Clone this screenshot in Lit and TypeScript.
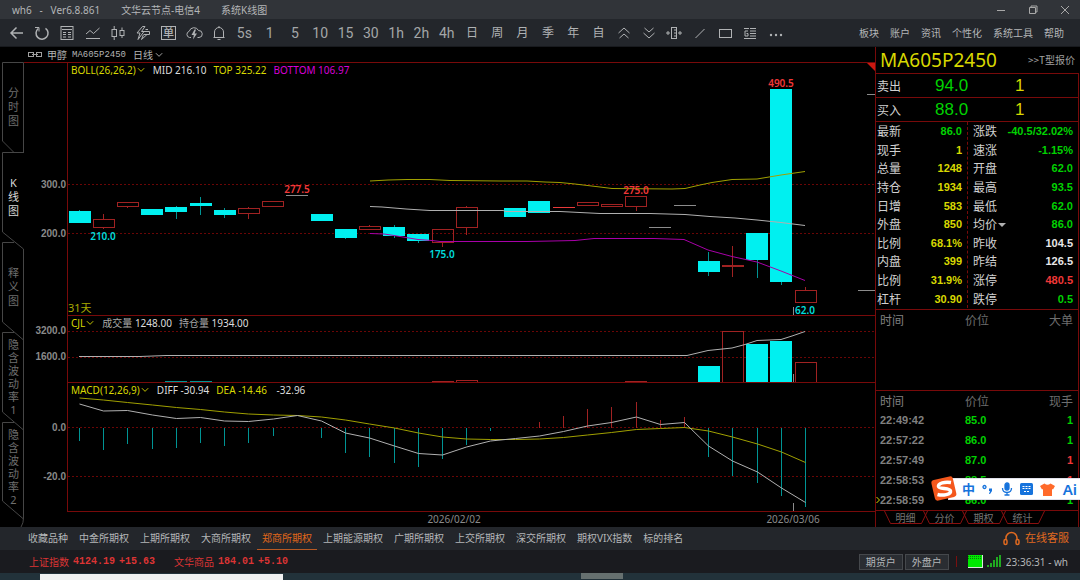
import { LitElement, html, svg, css } from "lit";
import { customElement } from "lit/decorators.js";
import { classMap } from "lit/directives/class-map.js";
import { styleMap } from "lit/directives/style-map.js";

type Kind = "down" | "up" | "flat" | "bright" | "redflat" | "cross";
// kind, body top, body bottom, high, low
type Candle = [Kind, number, number, number, number];

const FIRST_X = 79.5;
const STEP = 24.2;
const PLOT_X = 68;
const PLOT_W = 807;
const wickX = (i: number) => Math.floor(FIRST_X + STEP * i);
const bodyX = (i: number) => Math.round(FIRST_X + STEP * i) - 11;

const candles: Candle[] = [
  ["down", 211, 223, 210, 223],
  ["up", 219, 228, 214, 229],
  ["up", 202, 207, 202, 208],
  ["down", 209, 215, 209, 215],
  ["down", 207, 212, 206, 219],
  ["down", 203, 206, 197, 215],
  ["down", 210, 215, 208, 218],
  ["up", 208, 214, 207, 219],
  ["up", 201, 207, 201, 207],
  ["flat", 195, 196, 195, 196],
  ["down", 214, 221, 214, 221],
  ["down", 229, 238, 229, 239],
  ["up", 226, 230, 225, 230],
  ["down", 227, 236, 225, 238],
  ["down", 234, 241, 234, 243],
  ["up", 229, 243, 229, 247],
  ["up", 207, 228, 206, 235],
  ["bright", 210, 211, 210, 211],
  ["down", 208, 217, 208, 217],
  ["down", 201, 213, 201, 213],
  ["redflat", 207, 208, 207, 208],
  ["up", 202, 206, 202, 206],
  ["up", 204, 207, 204, 207],
  ["up", 196, 207, 196, 211],
  ["flat", 227, 228, 227, 228],
  ["flat", 205, 206, 205, 206],
  ["down", 261, 272, 252, 276],
  ["cross", 265, 267, 246, 277],
  ["down", 233, 260, 233, 278],
  ["down", 89, 282, 89, 285],
  ["up", 290, 303, 287, 303],
];

const bollTop = "370,181 388,180 407,179.5 430,179.5 450,180.5 500,181 527,181 545,182 560,182.5 575,184 600,187 612,188.5 672,189 685,188.5 700,185 712,182.5 732,179.5 757,179 781,175 805,171.5";
const bollMid = "370,206.5 382,207 394,208 406,209 430,210.5 503,210.5 506,211.5 560,211.5 600,213.5 650,213.5 685,214.5 710,216.5 735,218 757,220 781,222.5 805,225.5";
const bollBottom = "370,233.5 384,234 394,235.5 406,237.5 418,239.5 432,240.5 440,241.5 527,241.5 552,241 575,240.5 594,238.5 654,238.5 684,239.5 708,250 732,256.5 757,262 781,271 805,280.5";

const volumes: [number, "down" | "up", number][] = [
  [4, "down", 381], [5, "down", 381], [15, "up", 381], [16, "up", 380], [23, "up", 381],
  [26, "down", 366], [27, "up", 331], [28, "down", 344], [29, "down", 341], [30, "up", 362],
];
const openInterest = "79,356.5 140,356.5 166,355.5 560,355.5 687,355.5 708,350.5 732,348 745,344.5 757,340.5 781,339.5 792,336 805,331.5";

const macdBars = [441, 450, 444, 449, 448, 443, 446, 443, 436, 428, 438, 453, 457, 463, 467, 459, 445, 431, 428, 422, 416, 409, 407, 402, 420, 417, 457, 476, 483, 496, 507];
const dea = [398, 400, 402.5, 405, 407.5, 409.5, 412, 414, 415, 415.5, 417, 420, 424, 428, 433, 437, 439, 439.5, 439.5, 439, 437.5, 435, 432.5, 429.5, 428.5, 427.5, 431, 437, 444, 452, 462.5];
const diff = [404, 411, 410.5, 415, 418.5, 417.5, 421, 421.5, 419, 415.5, 421, 433, 438, 446, 453.5, 455, 447, 441, 438.5, 436, 431.5, 426, 422.5, 417, 424.5, 422.5, 446, 461, 472, 488, 502.5];
const series = (v: number[]) => v.map((y, i) => `${wickX(i) + 0.5},${y}`).join(" ");

const chev = html`<svg class="chev" viewBox="0 0 10 6" width="9" height="6"><path d="M1 1L4.500 4.500L8 1" /></svg>`;

const icon = (body: unknown, w = 18) => html`<svg class="ico" width=${w} height="16" viewBox="0 0 ${w} 16" aria-hidden="true">${body}</svg>`;

const tools: { label: string; view: unknown }[] = [
  { label: "返回", view: icon(svg`<path class="b" d="M15 8H3.500M8.500 2.500L3 8L8.500 13.500"/>`) },
  { label: "刷新", view: icon(svg`<path class="b" d="M5.300 3.500A6 6 0 1 0 12.500 3.300"/><path d="M2 2.500H6V6.500"/>`) },
  { label: "报价", view: icon(svg`<rect x="3" y="1.500" width="12" height="13"/><path d="M4 4.500H14M5 7.500H8M10 7.500H13M5 9.500H8M10 9.500H13M5 12H8M10 12H13"/>`) },
  { label: "分时", view: icon(svg`<path d="M2 9L6 5.500L9.500 8.500L15.500 3M2 13.500H16"/>`) },
  { label: "K线", view: icon(svg`<rect x="3" y="4.500" width="4.500" height="7"/><path d="M5.200 1V4.500M5.200 11.500V15M13 2.500V5.500M13 10.500V13"/><rect x="11" y="5.500" width="4" height="5"/>`) },
  { label: "闪电下单", view: icon(svg`<path d="M8.500 1.500L3 8H6L4 14.500L10 6.500H7.500L11 1.500ZM9 6.500H15.500V9.500H10M9.500 9.500L7.500 14.500L13 9.500M11.500 4.500H14"/>`) },
  { label: "下单", view: html`<span class="boxed">单</span>` },
  { label: "云", view: icon(svg`<path d="M6 12.500H4.500A3.200 3.200 0 0 1 4.200 6.300A5 5 0 0 1 13.500 5.500A3.500 3.500 0 0 1 14 12.500H12.500"/><path class="fill" d="M9.500 4.500L6.500 10H8.800L8 14.500L12 8.500H9.600L11 4.500Z"/>`) },
  { label: "提醒", view: icon(svg`<path d="M3.500 12.500H14.500M4.500 12.500V7A4.500 4.500 0 0 1 13.500 7V12.500M9 1V2.500M7.500 14.500H10.500"/>`) },
  ...["5s", "1", "5", "10", "15", "30", "1h", "2h", "4h"].map((t) => ({ label: t, view: html`<span class="num">${t}</span>` })),
  ...["日", "周", "月", "季", "年", "自"].map((t) => ({ label: t, view: html`<span class="han">${t}</span>` })),
  { label: "放大", view: icon(svg`<path d="M3.500 8L9 3L14.500 8M4.500 13L9 9L13.500 13"/>`) },
  { label: "缩小", view: icon(svg`<path d="M3.500 8L9 13L14.500 8M4.500 3L9 7L13.500 3"/>`) },
  { label: "间距", view: icon(svg`<rect x="6.500" y="2.500" width="5" height="11"/><path d="M9 5H11M9 8H11M9 11H11M1 8H5M13 8H17M3 6V10M15 6V10"/>`) },
  { label: "画线", view: icon(svg`<path d="M4.500 13L13.500 4"/>`) },
  { label: "矩形", view: icon(svg`<rect x="3.500" y="4.500" width="12" height="8"/>`) },
  { label: "资讯列表", view: icon(svg`<path d="M9 3.500H15M9 6H15M9 8.500H15M9 11H15M3 13.500H15M3 3.500H8"/><path d="M7 6H4V11H7V8.500H5.500"/>`) },
  { label: "更多", view: icon(svg`<circle class="fill" cx="4" cy="10" r="1.200"/><circle class="fill" cx="9" cy="10" r="1.200"/><circle class="fill" cx="14" cy="10" r="1.200"/>`) },
];

const quotes: [string, string, string, string, string, string][] = [
  ["最新", "86.0", "g", "涨跌", "-40.5/32.02%", "g"],
  ["现手", "1", "y", "速涨", "-1.15%", "g"],
  ["总量", "1248", "y", "开盘", "62.0", "g"],
  ["持仓", "1934", "y", "最高", "93.5", "g"],
  ["日增", "583", "y", "最低", "62.0", "g"],
  ["外盘", "850", "y", "均价", "86.0", "g"],
  ["比例", "68.1%", "y", "昨收", "104.5", "w"],
  ["内盘", "399", "y", "昨结", "126.5", "w"],
  ["比例", "31.9%", "y", "涨停", "480.5", "r"],
  ["杠杆", "30.90", "y", "跌停", "0.5", "g"],
];

const ticks: [string, string, string, string][] = [
  ["22:49:42", "85.0", "1", "g"],
  ["22:57:22", "86.0", "1", "g"],
  ["22:57:49", "87.0", "1", "r"],
  ["22:58:53", "88.5", "1", "r"],
  ["22:58:59", "86.0", "1", "g"],
];

const base = css`
  :host { box-sizing: border-box; }
  * { box-sizing: border-box; }
  button { appearance: none; background: none; border: 0; margin: 0; padding: 0; color: inherit; font: inherit; cursor: pointer; }
  a { color: inherit; text-decoration: none; }
  .y { color: #d8d800; }
  .g { color: #00d200; }
  .r { color: #f03838; }
  .w { color: #e8e8e8; }
  .m { color: #d800d8; }
  .chev { fill: none; stroke: currentColor; stroke-width: 1; }
`;

@customElement("chart-panels")
class ChartPanels extends LitElement {
  static styles = [base, css`
    :host { display: flex; flex-direction: column; flex: 1; min-width: 0; color: #dcdcdc; font: 10px/12px "Noto Sans", "Noto Sans CJK SC", sans-serif; }
    .symbol { height: 15px; display: flex; align-items: center; gap: 5px; padding: 0 4px; color: #b4b4b4; font-size: 10px; }
    .symbol .code { font: 9px/12px "Liberation Mono", monospace; margin-right: 2px; }
    .symbol button { display: flex; align-items: center; gap: 2px; }
    .link { fill: none; stroke: #a0a0a0; }
    .panels { flex: 1; min-height: 0; display: grid; grid-template-columns: 43px 1fr; grid-template-rows: 253fr 67fr 129fr; border-bottom: 1px solid transparent; }
    .axis, .plot { position: relative; min-height: 0; }
    .axis.first { border-top: 1px solid #780a0a; }
    .axis span { position: absolute; right: 1px; font: bold 10px/12px "Liberation Sans", sans-serif; color: #8a8a8a; margin-top: -6px; }
    .plot { border-top: 1px solid #780a0a; border-left: 1px solid #780a0a; display: flex; flex-direction: column; justify-content: space-between; }
    .plot.last { box-shadow: 0 1px 0 #780a0a; }
    .plot > svg { position: absolute; inset: 0; width: 100%; height: 100%; }
    .head { position: relative; display: flex; align-items: center; gap: 7px; padding: 0 3px; height: 13px; white-space: nowrap; }
    .head button { display: flex; align-items: center; gap: 1px; }
    .head .han { color: #a8a8a8; }
    .days { position: relative; color: #a8a800; line-height: 14px; font-size: 11px; }
    .note { position: absolute; font-weight: 600; transform: translateX(-50%); line-height: 12px; }
    .cy { color: #00dcdc; }
    .dates { height: 15px; position: relative; margin-left: 44px; color: #8a8a8a; font: 10px/14px "Noto Sans", sans-serif; }
    .dates span { position: absolute; transform: translateX(-50%); }
    .crisp { shape-rendering: crispEdges; }
    .grid { stroke: #6a0606; stroke-dasharray: 2 2; fill: none; }
    .body-down { fill: #00f0f0; }
    .body-up { fill: none; stroke: #a02222; }
    .wick-down { fill: #009494; }
    .wick-up { fill: #a02222; }
    .grey { fill: #8c8c8c; }
    .white { fill: #f0f0f0; }
    .red { fill: #e83a3a; }
    .corner { fill: #cc1810; }
    .l { fill: none; stroke-width: 1; }
    .ly { stroke: #a0a000; }
    .lw { stroke: #b0b0b0; }
    .lm { stroke: #a800a8; }
  `];

  private at(x: number) {
    return `${((x - PLOT_X) / PLOT_W) * 100}%`;
  }

  private note(text: string, x: number, y: number, cls: string) {
    return html`<span class="note ${cls}" style=${styleMap({ left: this.at(x), top: `${((y - 63) / 252) * 100}%` })}>${text}</span>`;
  }

  private candle([kind, top, bottom, high, low]: Candle, i: number) {
    const x = wickX(i);
    const left = bodyX(i);
    if (kind === "flat" || kind === "bright" || kind === "redflat") {
      const fill = { flat: "grey", bright: "white", redflat: "red" }[kind];
      return svg`<rect class=${fill} x=${left} y=${top} width="22" height="1"/>`;
    }
    const wick = kind === "down" ? "wick-down" : "wick-up";
    return svg`
      ${high < top ? svg`<rect class=${wick} x=${x} y=${high} width="1" height=${top - high}/>` : ""}
      ${low > bottom ? svg`<rect class=${wick} x=${x} y=${bottom} width="1" height=${low - bottom}/>` : ""}
      ${kind === "cross" ? svg`<rect class="wick-up" x=${left} y=${top} width="22" height=${bottom - top}/>` : ""}
      ${kind === "down" ? svg`<rect class="body-down" x=${left} y=${top} width="22" height=${bottom - top}/>` : ""}
      ${kind === "up" ? svg`<rect class="body-up" x=${left + 0.5} y=${top + 0.5} width="21" height=${bottom - top - 1}/>` : ""}`;
  }

  private volume([i, kind, y]: [number, "down" | "up", number]) {
    const left = bodyX(i);
    if (kind === "down") {
      return svg`<rect class=${y < 380 ? "body-down" : "wick-down"} x=${left} y=${y} width="22" height=${382 - y}/>`;
    }
    return svg`<path class="body-up" d="M${left + 0.5} 382V${y + 0.5}H${left + 21.5}V382"/>`;
  }

  private gridLine(y: number) {
    return svg`<path class="grid crisp" d="M68 ${y + 0.5}H875"/>`;
  }

  private axisLabel(text: string, y: number, y0: number, h: number) {
    return html`<span style=${styleMap({ top: `${((y - y0) / h) * 100}%` })}>${text}</span>`;
  }

  render() {
    return html`
      <div class="symbol">
        <svg class="link" width="14" height="8" viewBox="0 0 14 8"><rect x=".5" y="1.500" width="5" height="4"/><rect x="8.500" y="1.500" width="5" height="4"/><path d="M4 3.500H10"/></svg>
        <span>甲醇</span><span class="code">MA605P2450</span>
        <button>日线${chev}</button>
      </div>
      <div class="panels">
        <div class="axis first">${this.axisLabel("300.0", 185, 63, 252)}${this.axisLabel("200.0", 234, 63, 252)}</div>
        <div class="plot">
          <svg viewBox="68 63 807 252" preserveAspectRatio="none">
            ${this.gridLine(184)}${this.gridLine(233)}
            <g class="crisp">${candles.map((c, i) => this.candle(c, i))}
              <rect class="grey" x="867" y="94" width="8" height="1"/><rect class="grey" x="858" y="290" width="17" height="1"/>
              <rect class="grey" x="793" y="307" width="1" height="8"/></g>
            <polyline class="l ly" points=${bollTop}/><polyline class="l lw" points=${bollMid}/><polyline class="l lm" points=${bollBottom}/>
            <path class="corner" d="M867 63H875V71Z"/>
          </svg>
          <div class="head"><button class="y">BOLL(26,26,2)${chev}</button><span>MID 216.10</span><span class="y">TOP 325.22</span><span class="m">BOTTOM 106.97</span></div>
          ${this.note("277.5", 297, 183, "r")}${this.note("275.0", 636, 184, "r")}${this.note("490.5", 781, 77, "r")}
          ${this.note("210.0", 103, 230, "cy")}${this.note("175.0", 442, 248, "cy")}${this.note("62.0", 805, 304, "cy")}
          <div class="days">31天</div>
        </div>
        <div class="axis">${this.axisLabel("3200.0", 331, 315, 67)}${this.axisLabel("1600.0", 357, 315, 67)}</div>
        <div class="plot">
          <svg viewBox="68 316 807 66" preserveAspectRatio="none">
            ${this.gridLine(331)}${this.gridLine(357)}
            <g class="crisp">${volumes.map((v) => this.volume(v))}
              <rect class="grey" x="793" y="374" width="1" height="8"/></g>
            <polyline class="l lw" points=${openInterest}/>
          </svg>
          <div class="head"><button class="y">CJL${chev}</button><span><span class="han">成交量</span> 1248.00</span><span><span class="han">持仓量</span> 1934.00</span></div>
        </div>
        <div class="axis">${this.axisLabel("0.0", 428, 382, 129)}${this.axisLabel("-20.0", 477, 382, 129)}</div>
        <div class="plot last">
          <svg viewBox="68 383 807 128" preserveAspectRatio="none">
            ${this.gridLine(427)}${this.gridLine(476)}
            <g class="crisp">${macdBars.map((y, i) => svg`<rect class=${y > 428 ? "wick-down" : "wick-up"} x=${wickX(i)} y=${Math.min(y, 428)} width="1" height=${Math.abs(y - 428)}/>`)}
              <rect class="grey" x="793" y="503" width="1" height="8"/></g>
            <polyline class="l ly" points=${series(dea)}/><polyline class="l lw" points=${series(diff)}/>
          </svg>
          <div class="head"><button class="y">MACD(12,26,9)${chev}</button><span>DIFF -30.94</span><span class="y">DEA -14.46</span><span>&nbsp;-32.96</span></div>
        </div>
      </div>
      <div class="dates"><span style=${styleMap({ left: this.at(454) })}>2026/02/02</span><span style=${styleMap({ left: this.at(793) })}>2026/03/06</span></div>
    `;
  }
}

@customElement("quote-panel")
class QuotePanel extends LitElement {
  static styles = [base, css`
    :host { display: flex; flex-direction: column; width: 205px; flex: none; font: 12px/16px "Noto Sans CJK SC", sans-serif; color: #d0d0d0; }
    .top, .body { border-left: 1px solid #780a0a; }
    .top { height: 26px; display: flex; align-items: center; justify-content: space-between; padding: 0 5px 0 4px; }
    .code { font: 19px/24px "Noto Sans", sans-serif; color: #d8d800; }
    .t { font-size: 10px; color: #a0a0a0; }
    .body { border-right: 1px solid #780a0a; margin-right: 1px; flex: 1; }
    .deal { height: 24px; border-top: 1px solid #780a0a; display: grid; grid-template-columns: 58px 1fr 63px; align-items: center; padding-left: 1px; }
    .deal b { font: 17px/22px "Liberation Sans", sans-serif; }
    .quotes { border-top: 1px solid #780a0a; display: grid; grid-template-columns: 91px 1fr; margin: 0; padding-bottom: 1px; }
    .pair { height: 186px; display: grid; grid-template-rows: repeat(10, 1fr); padding: 0 5px 0 1px; margin: 0; }
    .pair + .pair { border-left: 1px dashed #780a0a; padding-left: 5px; }
    .pair div { display: flex; justify-content: space-between; align-items: center; min-height: 0; line-height: 18px; }
    dd { margin: 0; font: bold 11px/16px "Liberation Sans", sans-serif; }
    dt { display: flex; align-items: center; gap: 1px; }
    .tri { fill: #b0b0b0; }
    .depth { border-top: 1px solid #780a0a; height: 81px; }
    .ticks { border-top: 1px solid #780a0a; border-bottom: 1px solid #780a0a; }
    table { border-collapse: collapse; width: 100%; table-layout: fixed; }
    th { font-weight: 400; color: #6e6e6e; text-align: left; padding: 0; height: 19px; line-height: 18px; }
    td { font: bold 11px/18px "Liberation Sans", sans-serif; padding: 0; height: 20px; }
    th:first-child, td:first-child { padding-left: 4px; width: 89px; color: #808080; position: relative; }
    th:last-child, td:last-child { text-align: right; padding-right: 5px; }
    .mark { position: absolute; left: 0; top: 6px; fill: none; stroke: #d8d800; }
    nav { height: 16px; display: flex; padding-left: 8px; margin-top: -1px; }
    nav button { position: relative; width: 39px; height: 14px; padding-left: 4px; font-size: 10px; line-height: 13px; color: #747474; }
    nav svg { position: absolute; left: 0; top: 0; width: 44px; height: 14px; fill: none; stroke: #8a1010; }
  `];

  render() {
    return html`
      <div class="top"><span class="code">MA605P2450</span><a class="t" href="#t">&gt;&gt;T型报价</a></div>
      <div class="body">
        <div class="deal"><span>卖出</span><b class="g">94.0</b><b class="y">1</b></div>
        <div class="deal"><span>买入</span><b class="g">88.0</b><b class="y">1</b></div>
        <div class="quotes">
          <dl class="pair">${quotes.map((q) => html`<div><dt>${q[0]}</dt><dd class=${q[2]}>${q[1]}</dd></div>`)}</dl>
          <dl class="pair">${quotes.map((q) => html`<div><dt>${q[3]}${q[3] === "均价" ? html`<svg class="tri" width="8" height="8" viewBox="0 0 8 8"><path d="M0 3H8L4 7Z"/></svg>` : ""}</dt><dd class=${q[5]}>${q[4]}</dd></div>`)}</dl>
        </div>
        <div class="depth"><table><thead><tr><th>时间</th><th>价位</th><th>大单</th></tr></thead></table></div>
        <div class="ticks"><table>
          <thead><tr><th>时间</th><th>价位</th><th>现手</th></tr></thead>
          <tbody>${ticks.map((t, i) => html`<tr>
            <td>${i === 4 ? html`<svg class="mark" width="5" height="8" viewBox="0 0 5 8"><path d="M.5 1L3.500 4L.5 7"/></svg>` : ""}${t[0]}</td>
            <td class="g">${t[1]}</td><td class=${t[3]}>${t[2]}</td></tr>`)}</tbody>
        </table></div>
        <nav>${["明细", "分价", "期权", "统计"].map((t) => html`<button><svg viewBox="0 0 44 14"><path d="M.5 1L6.500 13.500H37.500L43.500 1"/></svg>${t}</button>`)}</nav>
      </div>
    `;
  }
}

@customElement("app-root")
class AppRoot extends LitElement {
  static styles = [base, css`
    :host { display: flex; flex-direction: column; height: 100vh; min-height: 560px; overflow: hidden; background: #000; color: #b4b6b8; font: 10px/14px "Noto Sans", "Noto Sans CJK SC", sans-serif; position: relative; }
    .title { height: 19px; background: #313439; display: flex; align-items: center; gap: 21px; padding: 0 6px 0 12px; }
    .title .app { white-space: pre; }
    .win { margin-left: auto; display: flex; gap: 14px; }
    .win button { width: 18px; height: 18px; display: grid; place-items: center; }
    .win svg { fill: none; stroke: #a8a8a8; }
    .bar { height: 28px; background: #23262b; display: flex; align-items: center; padding: 0 16px 0 4px; border-bottom: 1px solid #181a1e; }
    .tools { display: flex; flex: 0 1 784px; }
    .tools button { flex: 1; height: 27px; display: grid; place-items: center; color: #b0b2b4; }
    .ico { fill: none; stroke: currentColor; stroke-width: 1; }
    .ico .b { stroke-width: 1.500; }
    .ico .fill { fill: currentColor; stroke: none; }
    .num { font: 14px/18px Roboto, sans-serif; color: #a4a6a8; }
    .han { font-size: 12px; line-height: 18px; }
    .boxed { border: 1px solid #b0b2b4; width: 15px; height: 14px; font-size: 11px; line-height: 11px; font-weight: 500; text-align: center; }
    .menu { margin-left: auto; display: flex; gap: 11px; }
    .main { flex: 1; min-height: 0; display: flex; }
    .side { width: 24px; flex: none; margin-top: 15px; position: relative; display: flex; flex-direction: column; padding-left: 3px; }
    .side svg { position: absolute; left: 0; top: 0; fill: none; stroke: #464646; pointer-events: none; overflow: visible; }
    .side button { height: 90px; width: 21px; font-size: 11px; line-height: 14px; color: #6e6e6e; display: flex; flex-direction: column; align-items: center; justify-content: center; }
    .side button.long { line-height: 13px; }
    .side button.on { color: #d8d8d8; }
    .boards { height: 23px; background: #23262b; display: flex; align-items: stretch; gap: 1px; padding: 0 11px 0 23px; }
    .boards a { padding: 0 5px; line-height: 22px; border-bottom: 1px solid transparent; }
    .boards a.on { color: #e0661a; border-color: #b85a24; }
    .boards .help { margin-left: auto; padding: 0; display: flex; align-items: center; gap: 5px; color: #e06a20; font-size: 11px; }
    .help svg { fill: none; stroke: currentColor; stroke-width: 1.500; }
    .status { height: 23px; background: #1a1b1f; display: flex; align-items: center; padding: 0 12px 0 29px; }
    .idx { display: flex; gap: 4px; color: #dc3434; margin-right: 19px; }
    .idx b { font: bold 10px/14px "Liberation Mono", monospace; }
    .right { margin-left: auto; display: flex; align-items: center; }
    .acct { width: 44px; height: 16px; border: 1px solid #45484c; background: #2a2d32; margin-right: 2px; line-height: 14px; color: #b4b6b8; }
    .sep { width: 1px; height: 11px; background: #7a1010; margin: 0 11px 0 5px; }
    .sig { margin: 0 5px 0 4px; }
    .clock { white-space: nowrap; }
    .desk { height: 7px; background: #22323a; display: flex; padding-left: 40px; }
    .desk i { height: 6px; margin-top: 1px; }
    .desk .a { width: 243px; background: #f0f0f0; }
    .desk .b { width: 42px; margin-left: 298px; background: #66706f; margin-top: 0; }
    .ime { position: absolute; right: 0; bottom: 80px; height: 22px; width: 132px; background: #fff; display: flex; align-items: center; justify-content: space-between; padding: 0 3px 0 13px; color: #1673dc; border: 1px solid #dfe0ea; border-right: 0; }
    .ime .logo { position: absolute; left: -19px; top: -4px; }
    .ime b { font-size: 13px; line-height: 18px; }
    .ime .ai { font-size: 15px; font-weight: 600; }
  `];

  render() {
    const side = ["分时图", "K线图", "释义图", "隐含波动率1", "隐含波动率2"];
    const boards = ["收藏品种", "中金所期权", "上期所期权", "大商所期权", "郑商所期权", "上期能源期权", "广期所期权", "上交所期权", "深交所期权", "期权VIX指数", "标的排名"];
    return html`
      <header class="title">
        <span class="app">wh6   -   Ver6.8.861</span><span>文华云节点-电信4</span><span>系统K线图</span>
        <div class="win">
          <button aria-label="最小化"><svg width="10" height="10"><path d="M1 5.500H9"/></svg></button>
          <button aria-label="还原"><svg width="10" height="10"><path d="M1.500 2.500H7.500V8.500H1.500ZM3 2.500V1H9V7H7.500"/></svg></button>
          <button aria-label="关闭"><svg width="10" height="10"><path d="M1 1L9 9M9 1L1 9"/></svg></button>
        </div>
      </header>
      <div class="bar">
        <div class="tools">${tools.map((t) => html`<button aria-label=${t.label}>${t.view}</button>`)}</div>
        <nav class="menu">${["板块", "账户", "资讯", "个性化", "系统工具", "帮助"].map((t) => html`<a href="#m">${t}</a>`)}</nav>
      </div>
      <div class="main">
        <nav class="side">
          <svg width="25" height="466" viewBox="0 0 25 466">
            <path d="M23.500 90V.5H2.500V79L14 90.500"/>
            <path d="M24 90.500H2.500V170L23.500 187V456Q23.500 461 21 465"/>
            <path d="M14 180.500H2.500V260L23.500 278M14 270.500H2.500V350L23.500 368M14 360.500H2.500V439L23.500 457"/>
          </svg>
          ${side.map((t, i) => html`<button class=${classMap({ on: i === 1, long: i > 2 })}>${[...t].map((c) => html`<span>${c}</span>`)}</button>`)}
        </nav>
        <chart-panels></chart-panels>
        <quote-panel></quote-panel>
      </div>
      <nav class="boards">
        ${boards.map((t, i) => html`<a href="#b" class=${classMap({ on: i === 4 })}>${t}</a>`)}
        <a class="help" href="#help"><svg width="17" height="15" viewBox="0 0 17 15"><path d="M3 8.500V7A5.500 5.500 0 0 1 14 7V8.500"/><rect x="1" y="8.500" width="3" height="5" rx="1.500"/><rect x="13" y="8.500" width="3" height="5" rx="1.500"/></svg>在线客服</a>
      </nav>
      <footer class="status">
        <span class="idx"><span>上证指数</span><b>4124.19</b><b>+15.63</b></span>
        <span class="idx"><span>文华商品</span><b>184.01</b><b>+5.10</b></span>
        <div class="right">
          <button class="acct">期货户</button><button class="acct">外盘户</button><span class="sep"></span>
          <svg width="15" height="13" viewBox="0 0 15 13"><rect width="15" height="13" fill="#d8e8d8"/><rect width="14" height="12" fill="#00e800"/><path d="M0 1.500H14M0 3.500H14" stroke="#0a7a0a" stroke-dasharray="1 1"/></svg>
          <svg class="sig" width="14" height="13" viewBox="0 0 14 13" fill="#20a820"><rect x="0" y="10" width="2" height="2"/><rect x="3" y="8" width="2" height="4"/><rect x="6" y="5" width="2" height="7"/><rect x="9" y="2" width="2" height="10"/><rect x="12" y="0" width="2" height="12"/></svg>
          <span class="clock">23:36:31 - wh</span>
        </div>
      </footer>
      <div class="desk"><i class="a"></i><i class="b"></i></div>
      <div class="ime">
        <svg class="logo" width="29" height="28" viewBox="0 0 29 28"><rect x="3" y="3" width="22" height="21" rx="3" fill="#f4571c" transform="rotate(-13 14 14)"/><path d="M21 7.500C15 6.500 8 8 8.500 11.500C9 14.500 20 12.500 20.500 16C21 19.500 13 21 7.500 19.500" fill="none" stroke="#fff" stroke-width="3.500"/></svg>
        <b>中</b>
        <svg width="11" height="12" viewBox="0 0 11 12"><circle cx="2.500" cy="4" r="1.500" fill="none" stroke="#1673dc" stroke-width="1.300"/><path d="M7 5.500H10V8L8 11H7L8 8H7Z" fill="#1673dc"/></svg>
        <svg width="12" height="14" viewBox="0 0 12 14" fill="none" stroke="#1673dc" stroke-width="1.300"><rect x="4" y="1" width="4" height="7" rx="2" fill="#1673dc"/><path d="M1.500 6C1.500 12 10.500 12 10.500 6M6 10.500V13M3.500 13H8.500"/></svg>
        <svg width="13" height="12" viewBox="0 0 13 12"><rect width="13" height="12" rx="1.500" fill="#1673dc"/><path d="M2.500 3.500H11M2.500 5.500H11M4 8.500H9" stroke="#fff" stroke-dasharray="2 1"/></svg>
        <svg width="15" height="13" viewBox="0 0 15 13"><path d="M4.500 0.500Q7.500 3 10.500 .5L15 3L13 6.500L12 6V13H3V6L2 6.500L0 3Z" fill="#ff6a2a"/></svg>
        <b class="ai">Ai</b>
      </div>
    `;
  }
}
